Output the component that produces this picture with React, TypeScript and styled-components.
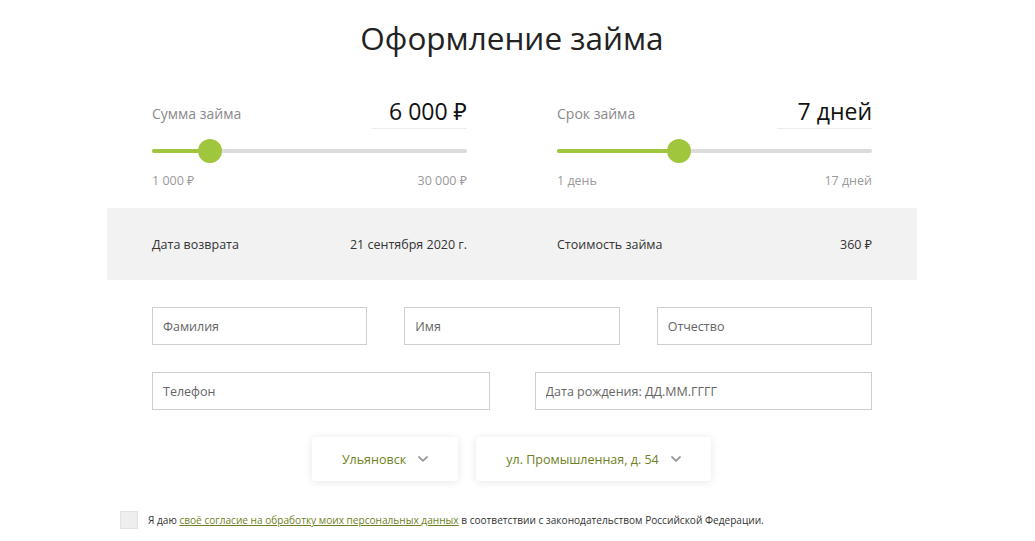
import React from "react";
import styled, { createGlobalStyle } from "styled-components";

const Global = createGlobalStyle`
  html, body { margin: 0; padding: 0; background: #fff; }
  body { font-family: "Open Sans", "Noto Sans", sans-serif; color: #222; }
  * { box-sizing: border-box; }
`;

const Page = styled.div`
  width: 1024px;
  display: flex;
  flex-direction: column;
  align-items: center;
`;

const Title = styled.h1`
  margin: 18px 0 0;
  font-size: 31.5px;
  font-weight: 400;
  line-height: 40px;
  color: #222;
  text-align: center;
`;

const Container = styled.div`
  width: 810px;
  display: flex;
  flex-direction: column;
`;

const Columns = styled.div`
  display: grid;
  grid-template-columns: 315px 315px;
  column-gap: 90px;
  padding: 0 45px;
`;

const SliderRow = styled(Columns)`
  margin-top: 38px;
  height: 112px;
`;

const SliderBlock = styled.div`
  display: flex;
  flex-direction: column;
`;

const Head = styled.div`
  display: flex;
  justify-content: space-between;
  align-items: flex-end;
`;

const Label = styled.span`
  font-size: 14px;
  color: #8a8a8a;
  line-height: 20px;
  margin-bottom: 5px;
`;

const Value = styled.div`
  width: 95px;
  text-align: right;
  font-size: 23px;
  line-height: 30px;
  color: #111;
  border-bottom: 1px solid #ececec;
  padding-bottom: 2px;
`;

const Track = styled.div`
  position: relative;
  height: 4px;
  margin-top: 20px;
  background: #dcdcdc;
  border-radius: 2px;
`;

const Fill = styled.div`
  position: absolute;
  left: 0;
  top: 0;
  bottom: 0;
  background: #a0c63e;
  border-radius: 2px;
`;

const Thumb = styled.div`
  position: absolute;
  top: 50%;
  width: 24px;
  height: 24px;
  margin: -12px 0 0 -12px;
  border-radius: 50%;
  background: #a0c63e;
`;

const Limits = styled.div`
  display: flex;
  justify-content: space-between;
  margin-top: 20px;
  font-size: 12.5px;
  line-height: 16px;
  color: #9a9a9a;
`;

const Summary = styled(Columns)`
  background: #f2f2f2;
  height: 72px;
  align-items: center;
`;

const SummaryCell = styled.div`
  display: flex;
  justify-content: space-between;
  font-size: 12.5px;
  color: #333;
`;

const Form = styled.div`
  padding: 27px 45px 0;
  display: flex;
  flex-direction: column;
  gap: 27px;
`;

const FieldRow = styled.div<{ $cols: number; $gap: number }>`
  display: grid;
  grid-template-columns: repeat(${(p) => p.$cols}, 1fr);
  column-gap: ${(p) => p.$gap}px;
`;

const Input = styled.input`
  height: 38px;
  border: 1px solid #cfcfcf;
  padding: 0 10px;
  font-family: inherit;
  font-size: 12.5px;
  color: #333;
  outline: none;
  &::placeholder { color: #666; }
`;

const Selects = styled.div`
  display: flex;
  justify-content: center;
  gap: 18px;
  margin: 27px 0 0 -1px;
`;

const Select = styled.div<{ $w: number }>`
  width: ${(p) => p.$w}px;
  height: 44px;
  display: flex;
  align-items: center;
  justify-content: center;
  gap: 12px;
  background: #fff;
  border-radius: 3px;
  box-shadow: 0 1px 8px rgba(0, 0, 0, 0.1);
  font-size: 12.5px;
  color: #6f7f24;
`;

const Consent = styled.label`
  display: flex;
  align-items: center;
  gap: 10px;
  margin: 30px 0 0 13px;
  font-size: 10.1px;
  color: #333;
`;

const Box = styled.span`
  width: 18px;
  height: 18px;
  background: #eeeeee;
  border: 1px solid #e2e2e2;
  flex: none;
`;

const Link = styled.a`
  color: #6f7f24;
  text-decoration: underline;
`;

const Chevron = () => (
  <svg width="10" height="6" viewBox="0 0 10 6" fill="none">
    <path d="M1 1l4 3.8L9 1" stroke="#9a9a9a" strokeWidth="1.8" strokeLinecap="round" strokeLinejoin="round" />
  </svg>
);

const Slider = ({ label, value, min, max, pct }: { label: string; value: string; min: string; max: string; pct: number }) => (
  <SliderBlock>
    <Head>
      <Label>{label}</Label>
      <Value>{value}</Value>
    </Head>
    <Track>
      <Fill style={{ width: `${pct}%` }} />
      <Thumb style={{ left: `${pct}%` }} />
    </Track>
    <Limits>
      <span>{min}</span>
      <span>{max}</span>
    </Limits>
  </SliderBlock>
);

export default function App() {
  return (
    <Page>
      <Global />
      <Title>Оформление займа</Title>
      <Container>
        <SliderRow>
          <Slider label="Сумма займа" value="6 000 ₽" min="1 000 ₽" max="30 000 ₽" pct={18.5} />
          <Slider label="Срок займа" value="7 дней" min="1 день" max="17 дней" pct={38.7} />
        </SliderRow>
        <Summary>
          <SummaryCell>
            <span>Дата возврата</span>
            <span>21 сентября 2020 г.</span>
          </SummaryCell>
          <SummaryCell>
            <span>Стоимость займа</span>
            <span>360 ₽</span>
          </SummaryCell>
        </Summary>
        <Form>
          <FieldRow $cols={3} $gap={37}>
            <Input placeholder="Фамилия" />
            <Input placeholder="Имя" />
            <Input placeholder="Отчество" />
          </FieldRow>
          <FieldRow $cols={2} $gap={45}>
            <Input placeholder="Телефон" />
            <Input placeholder="Дата рождения: ДД.ММ.ГГГГ" />
          </FieldRow>
        </Form>
        <Selects>
          <Select $w={146}>
            Ульяновск <Chevron />
          </Select>
          <Select $w={235}>
            ул. Промышленная, д. 54 <Chevron />
          </Select>
        </Selects>
        <Consent>
          <Box />
          <span>
            Я даю <Link href="#">своё согласие на обработку моих персональных данных</Link> в соответствии с законодательством Российской Федерации.
          </span>
        </Consent>
      </Container>
    </Page>
  );
}
